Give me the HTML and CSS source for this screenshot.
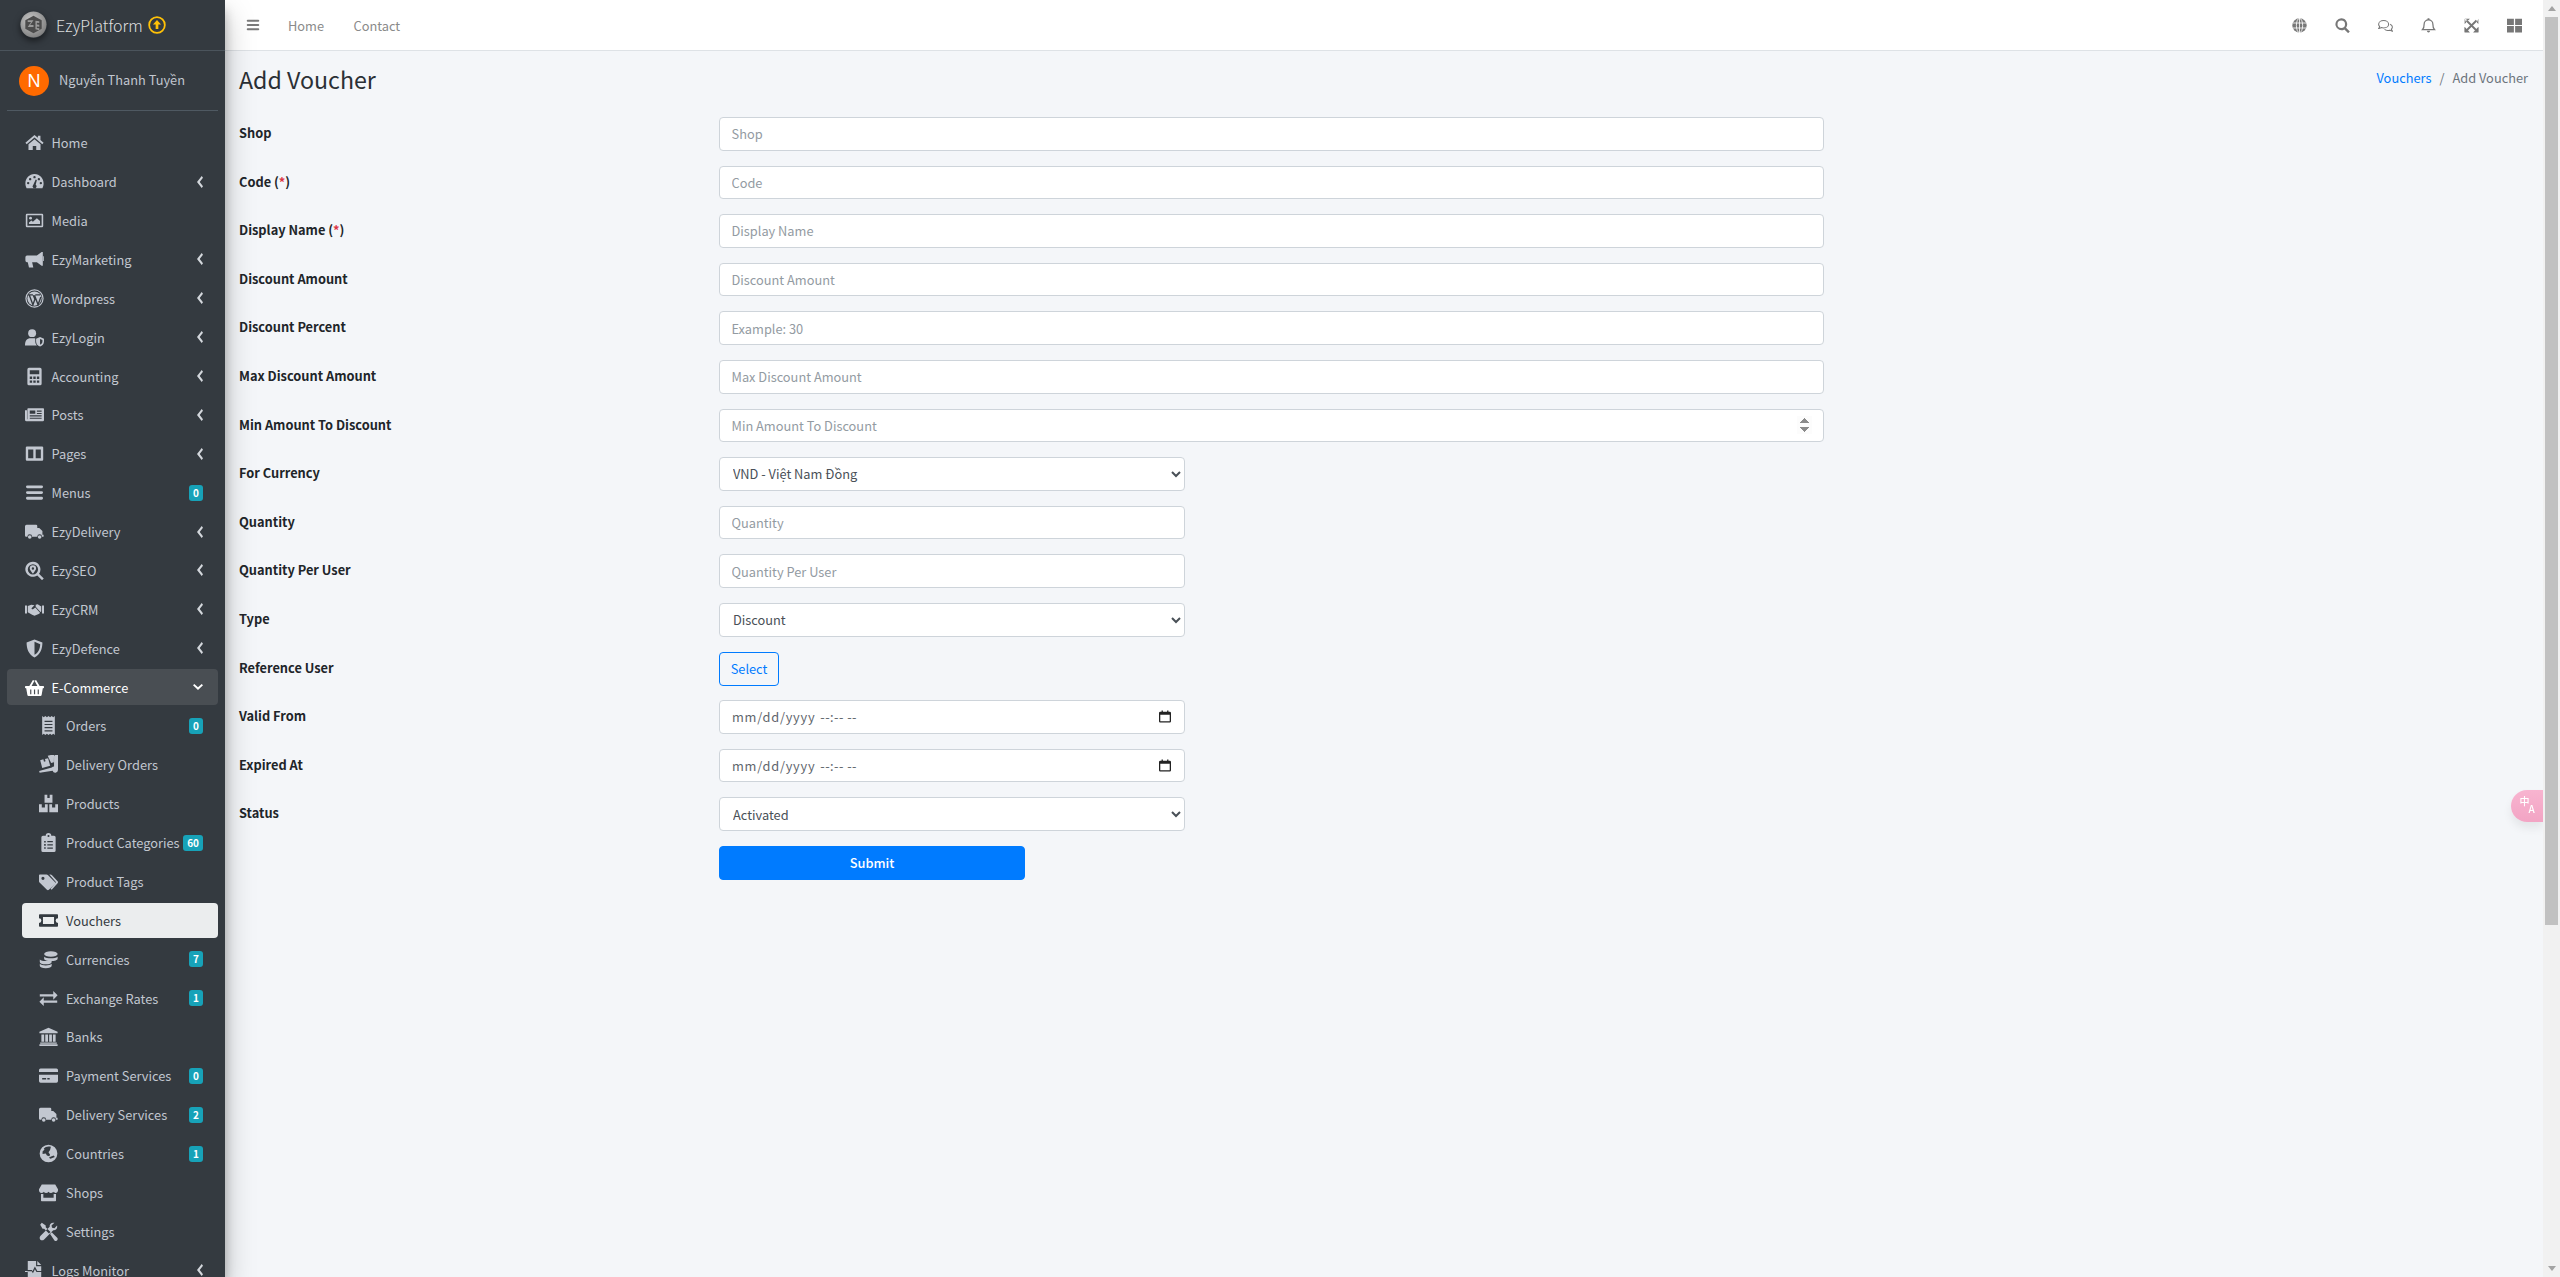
FILE: index.html
```html
<!DOCTYPE html>
<html lang="en">
<head>
<meta charset="utf-8">
<title>Add Voucher</title>
<link rel="stylesheet" href="styles.css">
</head>
<body>
<svg class="defs" aria-hidden="true">
<defs>
<radialGradient id="logo-grad" cx="40%" cy="35%" r="70%"><stop offset="0" stop-color="#c9c9c9"/><stop offset="1" stop-color="#7d7d7d"/></radialGradient>
<symbol id="i-logo" viewBox="0 0 28 28"><circle cx="14" cy="14" r="13.500" fill="url(#logo-grad)"/><path d="M14 5l8.500 4.500v9L14 23l-8.500-4.500v-9z" fill="#4c4c4c"/><path d="M8 9.500h6l-3.500 5H14v2H8l3.500-5H8zM16 10l4 .5v2l-2.500-.3v1.800l2.500.3v2l-2.500-.3v1.500l2.500.5v2l-4-1z" fill="#9a9a9a"/></symbol>
<symbol id="i-home" viewBox="0 0 24 24"><path d="M12 2.500 0.500 12.300l1.600 1.800L12 5.700l9.900 8.400 1.600-1.800-4-3.400V3.500h-3.200v2.600z"/><path d="M12 7.800 4.400 14.200V21.500h5.400v-5h4.400v5h5.400v-7.300z"/></symbol>
<symbol id="i-dash" viewBox="0 0 24 24"><path fill-rule="evenodd" d="M12 2.500C5.400 2.500 0.500 8 0.500 14.500c0 2.200.6 4 1.500 6h20c.9-2 1.500-3.800 1.500-6C23.500 8 18.600 2.500 12 2.500zM12 5a1.500 1.500 0 1 1 0 3 1.500 1.500 0 0 1 0-3zM6.500 7.500a1.500 1.500 0 1 1 0 3 1.500 1.500 0 0 1 0-3zM17.500 7.500a1.500 1.500 0 1 1 0 3 1.500 1.500 0 0 1 0-3zM4 12.500a1.500 1.500 0 1 1 0 3 1.500 1.500 0 0 1 0-3zM20 12.500a1.500 1.500 0 1 1 0 3 1.500 1.500 0 0 1 0-3zM13.500 9.500l1.500.5-1.500 6a2.500 2.500 0 1 1-3 .2z"/></symbol>
<symbol id="i-image" viewBox="0 0 24 24"><path fill-rule="evenodd" d="M2.500 3.500h19A1.500 1.500 0 0 1 23 5v14a1.500 1.500 0 0 1-1.500 1.500h-19A1.500 1.500 0 0 1 1 19V5a1.500 1.500 0 0 1 1.500-1.500zM3 5.500v13h18v-13z"/><circle cx="7" cy="9" r="1.800"/><path d="M5 16.500v-2l3-2.500 2 1.500 5-4.500 4 3.500v4z"/></symbol>
<symbol id="i-horn" viewBox="0 0 24 24"><path d="M21 2.500h1.500V20H21l-6-4.500H9l1.500 6.500H5L3.500 15.500H2.500C1.500 15.500 .5 14.500 .5 13V9.500C.5 8 1.500 7 2.500 7H15z"/><path d="M23 8h1v6h-1z"/></symbol>
<symbol id="i-wp" viewBox="0 0 24 24"><circle cx="12" cy="12" r="10.800" fill="none" stroke="currentColor" stroke-width="1.500"/><circle cx="12" cy="12" r="9"/><path d="M4 7.500h6M13 7.500h6M5.500 8 10 20l2.500-7-2-5M12 8l4.500 12L20 10" fill="none" stroke="#343a40" stroke-width="1.700"/></symbol>
<symbol id="i-ushield" viewBox="0 0 24 24"><circle cx="9" cy="6.500" r="5"/><path d="M0 22c0-6 2.500-9 7-9h4c1 0 1.500.1 2 .3V17c0 2 .8 3.600 2 5z"/><path fill-rule="evenodd" d="M19 11.500l5 2v3.500c0 3-2 5.500-5 6.500-3-1-5-3.500-5-6.500v-3.500zM19 14v7c1.800-.8 3-2.200 3-4v-2z"/></symbol>
<symbol id="i-calc" viewBox="0 0 24 24"><path fill-rule="evenodd" d="M5 1h14a2 2 0 0 1 2 2v18a2 2 0 0 1-2 2H5a2 2 0 0 1-2-2V3a2 2 0 0 1 2-2zM6 4v5h12V4zM6 12v3h3v-3zM10.500 12v3h3v-3zM15 12v3h3v-3zM6 17v3h3v-3zM10.500 17v3h3v-3zM15 17v3h3v-3z"/></symbol>
<symbol id="i-news" viewBox="0 0 24 24"><path fill-rule="evenodd" d="M4 4h19a1 1 0 0 1 1 1v14a1.500 1.500 0 0 1-1.500 1.500H2a2 2 0 0 1-2-2V6.500h2.500V18H3V5a1 1 0 0 1 1-1zM6 7v4h7V7zM15 7v1.500h6V7zM15 10v1.500h6V10zM6 13v1.500h15V13zM6 16v1.500h15V16z"/></symbol>
<symbol id="i-cols" viewBox="0 0 24 24"><path fill-rule="evenodd" d="M2.500 3h19A1.500 1.500 0 0 1 23 4.500v15a1.500 1.500 0 0 1-1.500 1.500h-19A1.500 1.500 0 0 1 1 19.500v-15A1.500 1.500 0 0 1 2.500 3zM4 7v11h6.500V7zM13.500 7v11H20V7z"/></symbol>
<symbol id="i-bars" viewBox="0 0 24 24"><path d="M3 3h18a1 1 0 0 1 0 3.500H3A1 1 0 0 1 3 3zM3 10.300h18a1 1 0 0 1 0 3.500H3a1 1 0 0 1 0-3.500zM3 17.500h18a1 1 0 0 1 0 3.500H3a1 1 0 0 1 0-3.500z"/></symbol>
<symbol id="i-truck" viewBox="0 0 24 24"><path d="M2 3.500h12a1.500 1.500 0 0 1 1.500 1.500v2.500H18l4 4v4.500h1.500v2.500h-2a3 3 0 0 0-6 0H9a3 3 0 0 0-6 0H1.500A1.500 1.500 0 0 1 0 17V5.500a2 2 0 0 1 2-2z"/><circle cx="6" cy="19" r="2.300"/><circle cx="18.500" cy="19" r="2.300"/></symbol>
<symbol id="i-seo" viewBox="0 0 24 24"><path fill-rule="evenodd" d="M10 1a9.500 9.500 0 0 1 7.700 15l6 6-2.200 2.200-6-6A9.500 9.500 0 1 1 10 1zM10 4a6.500 6.500 0 1 0 0 13 6.500 6.500 0 0 0 0-13z"/><path fill-rule="evenodd" d="M10 5.500a4 4 0 0 1 4 4c0 1.800-2.500 4.800-4 6.500-1.500-1.700-4-4.700-4-6.500a4 4 0 0 1 4-4zM10 8a1.500 1.500 0 1 0 0 3 1.500 1.500 0 0 0 0-3z"/></symbol>
<symbol id="i-shake" viewBox="0 0 24 24"><path d="M0 7h2.500v10H0zM21.500 7H24v10h-2.500zM3.500 7.500 8 6l4 .5-3.500 3.500c-.8 1 .8 2.500 2 1.500L13 9.500l6 6.500-1 1.500-6 2.500-3-1.500-5.500-3z"/><path d="M13.500 6l2.500-.5 3.500 2 1 .5v6.500l-1 .5-6-6.500z"/></symbol>
<symbol id="i-shield" viewBox="0 0 24 24"><path fill-rule="evenodd" d="M12 .5l10 4c0 8-2.500 15-10 19-7.500-4-10-11-10-19zM12 3.500V20c5-3 7-7.500 7.200-13.500z"/></symbol>
<symbol id="i-basket" viewBox="0 0 24 24"><path fill-rule="evenodd" d="M1 10h4.500L10 2.500l2 1L8.300 10h7.400L12 3.500l2-1L18.500 10H23a1 1 0 0 1 1 1v1a1 1 0 0 1-1 1h-.5l-1.500 8.500a1.500 1.500 0 0 1-1.500 1.200h-15A1.500 1.500 0 0 1 3 21.500L1.500 13H1a1 1 0 0 1-1-1v-1a1 1 0 0 1 1-1zM6.500 14.500v6h1.500v-6zM11.300 14.500v6h1.500v-6zM16 14.500v6h1.500v-6z"/></symbol>
<symbol id="i-receipt" viewBox="0 0 24 24"><path fill-rule="evenodd" d="M4 0l2 1.500L8 0l2 1.500L12 0l2 1.500L16 0l2 1.500L20 0v24l-2-1.500-2 1.500-2-1.500-2 1.500-2-1.500L8 24l-2-1.500L4 24zM7 6v1.500h10V6zM7 10v1.500h10V10zM7 14v1.500h10V14zM7 18v1.500h10V18z"/></symbol>
<symbol id="i-dolly" viewBox="0 0 24 24"><path d="M21.500 0H24v19a3.500 3.500 0 0 1-6.800 1L.8 22.500l-.6-2.300 16-4.300c.7-.7 1.600-1.300 2.800-1.300L19 1.500c0-.9 1.300-1.500 2.500-1.500z"/><path d="M1.500 6.500l4-1 .8 3 2-.5-.8-3 4-1 2.600 9.700-10 2.700zM11 1l6-1.500 2 0-.2 9.500-3.500 1z"/></symbol>
<symbol id="i-boxes" viewBox="0 0 24 24"><path d="M7 1h3.500v4h3V1H17v10H7zM0 13h3.500v4h4v-4H11v10H0zM13 13h3.500v4h4v-4H24v10H13z"/></symbol>
<symbol id="i-clip" viewBox="0 0 24 24"><path fill-rule="evenodd" d="M5 3.500h3.500a3.500 3.500 0 0 1 7 0H19a2 2 0 0 1 2 2V22a2 2 0 0 1-2 2H5a2 2 0 0 1-2-2V5.500a2 2 0 0 1 2-2zM12 2.500a1.300 1.300 0 1 0 0 2.600 1.300 1.300 0 0 0 0-2.600zM6.500 10v2h2v-2zM6.500 14v2h2v-2zM6.500 18v2h2v-2zM10.500 10.200v1.600h7v-1.600zM10.500 14.200v1.600h7v-1.600zM10.500 18.200v1.600h7v-1.600z"/></symbol>
<symbol id="i-tags" viewBox="0 0 24 24"><path fill-rule="evenodd" d="M1 3h8.500c.7 0 1.300.3 1.700.7l8.800 8.800a1.800 1.800 0 0 1 0 2.500L12.500 22.500a1.800 1.800 0 0 1-2.500 0L.7 13.200A2 2 0 0 1 0 11.700V4a1 1 0 0 1 1-1zM5 6a2 2 0 1 0 0 4 2 2 0 0 0 0-4z"/><path d="M13 3h1.500c.7 0 1.300.3 1.700.7l7.300 8a2 2 0 0 1 0 2.600l-7.500 8.200-1.500-1.500 6.500-7.800c.3-.3.300-.7 0-1z"/></symbol>
<symbol id="i-ticket" viewBox="0 0 24 24"><path fill-rule="evenodd" d="M1 4h22a1 1 0 0 1 1 1v4a3 3 0 0 0 0 6v4a1 1 0 0 1-1 1H1a1 1 0 0 1-1-1v-4a3 3 0 0 0 0-6V5a1 1 0 0 1 1-1zM5 7.500v9h14v-9z"/></symbol>
<symbol id="i-coins" viewBox="0 0 24 24"><ellipse cx="15" cy="5" rx="8.500" ry="3.500"/><path d="M6.500 8.500c1.500 1.300 5 2 8.500 2s7-.7 8.500-2V11c0 1.700-3.500 3-8.500 3s-8.500-1.300-8.500-3z"/><path d="M1 12c1.500 1.300 4 2 7.500 2s6-.7 7.500-2v3c0 1.700-3 3-7.500 3S1 16.700 1 15zM1 17.500c1.500 1.300 4 2 7.500 2s6-.7 7.500-2V20c0 1.700-3 3-7.500 3S1 21.700 1 20z"/></symbol>
<symbol id="i-swap" viewBox="0 0 24 24"><path d="M1 6.500h17V2.500l5.500 5.500-5.500 5.500v-4H1zM23 14.500H6v-4L.5 16 6 21.500v-4h17z"/></symbol>
<symbol id="i-bank" viewBox="0 0 24 24"><path d="M12 1l11.500 5v2H.5V6zM3 9.500h3.500v9H3zM7.900 9.500h3.500v9H7.900zM12.800 9.500h3.500v9h-3.500zM17.600 9.500H21v9h-3.400zM1.500 19.500h21V21h-21zM.5 21.800h23V24H.5z"/></symbol>
<symbol id="i-card" viewBox="0 0 24 24"><path fill-rule="evenodd" d="M0 11h24v8a2 2 0 0 1-2 2H2a2 2 0 0 1-2-2zM4 15v2h5v-2zM10.500 15v2h3v-2z"/><path d="M2 3h20a2 2 0 0 1 2 2v2.500H0V5a2 2 0 0 1 2-2z"/></symbol>
<symbol id="i-globe" viewBox="0 0 24 24"><path fill-rule="evenodd" d="M12 .8a11.200 11.200 0 1 1 0 22.400 11.200 11.200 0 0 1 0-22.400zM4.500 12.500l4-.5 1.500 2.500 3 1 1-2-2-3 2-3 1-4C12 2.500 8 3 6 6l1 1-2.500 2.500zM14.500 18.500l5.500-2-1.500-2-4 1.500-2 1.500z"/></symbol>
<symbol id="i-store" viewBox="0 0 24 24"><path d="M3.500 2h17L24 8c.3 2.500-1 4.500-3 4.500-1.500 0-2.500-.5-3-1.500-.7 1-1.800 1.500-3 1.500s-2.300-.5-3-1.500c-.7 1-1.800 1.500-3 1.500s-2.300-.5-3-1.500c-.5 1-1.500 1.500-3 1.500C1 12.500-.3 10.500 0 8z"/><path d="M2.500 14h3v4.500h13V14h3v8a1 1 0 0 1-1 1h-17a1 1 0 0 1-1-1z"/></symbol>
<symbol id="i-tools" viewBox="0 0 24 24"><path d="M1.500 3.500l2-2.500 5 3.500v2l6 6-2 2-6-6h-2zM18 1c-3 0-5 2.500-4.500 5L2 17.500C.5 19 .5 21 1.700 22.300 3 23.500 5 23.500 6.500 22L18 10.500c2.500.5 5-1.500 5-4.500 0-.5 0-1-.2-1.500L19.500 8l-3-.7-.7-3L19.500 1c-.5 0-1 0-1.500 0z"/><path d="M14 15l2-2 7 7a2.500 2.500 0 0 1-3.500 3.500z"/></symbol>
<symbol id="i-logfile" viewBox="0 0 24 24"><path d="M3.500 0H14v6.500h6.500V22a2 2 0 0 1-2 2H5.500a2 2 0 0 1-2-2V13h5l1.500 2.500 2.500-5 2 3.500h6v-1.500h-5L12.500 7l-3 6-.8-1.500H3.500z"/><path d="M15.500 0l5 5h-5zM0 12.500h3.500V14H0z"/></symbol>
<symbol id="i-search" viewBox="0 0 24 24"><path fill-rule="evenodd" d="M10 .5a9.500 9.500 0 0 1 7.700 15l6 6-2.700 2.700-6-6A9.500 9.500 0 1 1 10 .5zM10 4a6 6 0 1 0 0 12 6 6 0 0 0 0-12z"/></symbol>
<symbol id="i-comments" viewBox="0 0 24 24"><g fill="none" stroke="currentColor" stroke-width="1.700"><path d="M9 4c-4.400 0-8 2.500-8 6 0 1.500.7 2.800 1.700 3.800-.3 1.200-1 2.200-1.700 3 1.500 0 3-.7 4-1.500 1.200.5 2.500.7 4 .7 4.400 0 8-2.500 8-6s-3.600-6-8-6z"/><path d="M19.500 10c2 1 3.500 2.500 3.500 4.500 0 1.300-.6 2.500-1.600 3.500.3 1.200.9 2.200 1.600 3-1.500 0-2.900-.7-4-1.500-1.200.4-2.400.6-3.500.5-2 0-4-.8-5-2"/></g></symbol>
<symbol id="i-bell" viewBox="0 0 24 24"><path fill="none" stroke="currentColor" stroke-width="2" d="M12 3a7 7 0 0 1 7 7c0 5 1 7 2.500 8.500H2.500C4 17 5 15 5 10a7 7 0 0 1 7-7z"/><path d="M10.500.5h3V3h-3zM9.500 20.500h5a2.500 2.500 0 0 1-5 0z"/></symbol>
<symbol id="i-expand" viewBox="0 0 24 24"><path d="M1 1h8.500L7 3.500 1 1zM14.500 1H23v8.500L20.500 7 23 1zM1 14.500V23h8.500L7 20.500zM23 14.500V23h-8.500l2.500-2.500z"/><path d="M1 1v8.500L3.500 7zM1 23v-8.500L3.500 17zM23 23v-8.500L20.500 17z"/><path d="M4 4l16 16M20 4 4 20" fill="none" stroke="currentColor" stroke-width="3"/></symbol>
<symbol id="i-grid" viewBox="0 0 24 24"><path d="M0 1h11v10.300H0zM13 1h11v10.300H13zM0 12.700h11V23H0zM13 12.700h11V23H13z"/></symbol>
<symbol id="i-net" viewBox="0 0 24 24"><circle cx="12" cy="12" r="11.500"/><g fill="none" stroke="#fff" stroke-width="1.300"><ellipse cx="12" cy="12" rx="5" ry="11.500"/><path d="M12 0v24M1 8h22M1 16h22"/></g></symbol>
<symbol id="i-left" viewBox="0 0 6 12"><path d="M4.700 0 6 1.800 2.700 6 6 10.200 4.700 12 0 6z"/></symbol>
<symbol id="i-down" viewBox="0 0 10 6"><path d="M0 1.200 1.300 0 5 3.200 8.700 0 10 1.200 5 6z"/></symbol>
<symbol id="i-up" viewBox="0 0 20 20"><circle cx="10" cy="10" r="8.700" fill="none" stroke="currentColor" stroke-width="2"/><path d="M10 4.500l4.500 5h-3v5h-3v-5h-3z"/></symbol>
<symbol id="i-cal" viewBox="0 0 14 14"><path fill="#222" fill-rule="evenodd" d="M3 0h1.500v1.500h5V0H11v1.500h1.500A1.500 1.500 0 0 1 14 3v9.500a1.500 1.500 0 0 1-1.500 1.500h-11A1.500 1.500 0 0 1 0 12.500V3a1.500 1.500 0 0 1 1.500-1.500H3zM1.500 5v7.500h11V5z"/></symbol>
</defs>
</svg>

<div class="layout">
<aside class="sidebar">
  <div class="brand">
    <svg class="logo"><use href="#i-logo"/></svg>
    <span class="brand-name">EzyPlatform</span>
    <svg class="brand-up"><use href="#i-up"/></svg>
  </div>
  <div class="user">
    <span class="avatar">N</span>
    <span class="user-name">Nguyễn Thanh Tuyền</span>
  </div>
  <nav class="menu">
    <a class="link"><svg class="ic"><use href="#i-home"/></svg><span>Home</span></a>
    <a class="link"><svg class="ic"><use href="#i-dash"/></svg><span>Dashboard</span><svg class="chev"><use href="#i-left"/></svg></a>
    <a class="link"><svg class="ic"><use href="#i-image"/></svg><span>Media</span></a>
    <a class="link"><svg class="ic"><use href="#i-horn"/></svg><span>EzyMarketing</span><svg class="chev"><use href="#i-left"/></svg></a>
    <a class="link"><svg class="ic"><use href="#i-wp"/></svg><span>Wordpress</span><svg class="chev"><use href="#i-left"/></svg></a>
    <a class="link"><svg class="ic"><use href="#i-ushield"/></svg><span>EzyLogin</span><svg class="chev"><use href="#i-left"/></svg></a>
    <a class="link"><svg class="ic"><use href="#i-calc"/></svg><span>Accounting</span><svg class="chev"><use href="#i-left"/></svg></a>
    <a class="link"><svg class="ic"><use href="#i-news"/></svg><span>Posts</span><svg class="chev"><use href="#i-left"/></svg></a>
    <a class="link"><svg class="ic"><use href="#i-cols"/></svg><span>Pages</span><svg class="chev"><use href="#i-left"/></svg></a>
    <a class="link"><svg class="ic"><use href="#i-bars"/></svg><span>Menus</span><b class="badge">0</b></a>
    <a class="link"><svg class="ic"><use href="#i-truck"/></svg><span>EzyDelivery</span><svg class="chev"><use href="#i-left"/></svg></a>
    <a class="link"><svg class="ic"><use href="#i-seo"/></svg><span>EzySEO</span><svg class="chev"><use href="#i-left"/></svg></a>
    <a class="link"><svg class="ic"><use href="#i-shake"/></svg><span>EzyCRM</span><svg class="chev"><use href="#i-left"/></svg></a>
    <a class="link"><svg class="ic"><use href="#i-shield"/></svg><span>EzyDefence</span><svg class="chev"><use href="#i-left"/></svg></a>
    <a class="link open"><svg class="ic"><use href="#i-basket"/></svg><span>E-Commerce</span><svg class="chev-down"><use href="#i-down"/></svg></a>
    <a class="link sub"><svg class="ic"><use href="#i-receipt"/></svg><span>Orders</span><b class="badge">0</b></a>
    <a class="link sub"><svg class="ic"><use href="#i-dolly"/></svg><span>Delivery Orders</span></a>
    <a class="link sub"><svg class="ic"><use href="#i-boxes"/></svg><span>Products</span></a>
    <a class="link sub"><svg class="ic"><use href="#i-clip"/></svg><span>Product Categories</span><b class="badge">60</b></a>
    <a class="link sub"><svg class="ic"><use href="#i-tags"/></svg><span>Product Tags</span></a>
    <a class="link sub active"><svg class="ic"><use href="#i-ticket"/></svg><span>Vouchers</span></a>
    <a class="link sub"><svg class="ic"><use href="#i-coins"/></svg><span>Currencies</span><b class="badge">7</b></a>
    <a class="link sub"><svg class="ic"><use href="#i-swap"/></svg><span>Exchange Rates</span><b class="badge">1</b></a>
    <a class="link sub"><svg class="ic"><use href="#i-bank"/></svg><span>Banks</span></a>
    <a class="link sub"><svg class="ic"><use href="#i-card"/></svg><span>Payment Services</span><b class="badge">0</b></a>
    <a class="link sub"><svg class="ic"><use href="#i-truck"/></svg><span>Delivery Services</span><b class="badge">2</b></a>
    <a class="link sub"><svg class="ic"><use href="#i-globe"/></svg><span>Countries</span><b class="badge">1</b></a>
    <a class="link sub"><svg class="ic"><use href="#i-store"/></svg><span>Shops</span></a>
    <a class="link sub"><svg class="ic"><use href="#i-tools"/></svg><span>Settings</span></a>
    <a class="link"><svg class="ic"><use href="#i-logfile"/></svg><span>Logs Monitor</span><svg class="chev"><use href="#i-left"/></svg></a>
  </nav>
</aside>

<div class="main">
  <header class="topbar">
    <svg class="top-burger"><use href="#i-bars"/></svg>
    <a class="top-link">Home</a>
    <a class="top-link">Contact</a>
    <div class="top-icons">
      <svg class="top-ic"><use href="#i-net"/></svg>
      <svg class="top-ic"><use href="#i-search"/></svg>
      <svg class="top-ic"><use href="#i-comments"/></svg>
      <svg class="top-ic"><use href="#i-bell"/></svg>
      <svg class="top-ic"><use href="#i-expand"/></svg>
      <svg class="top-ic"><use href="#i-grid"/></svg>
    </div>
  </header>
  <section class="content">
    <div class="title-row">
      <h1>Add Voucher</h1>
      <div class="crumbs"><a>Vouchers</a><i>/</i><span>Add Voucher</span></div>
    </div>
    <form class="form">
      <div class="row"><label>Shop</label><input class="field" placeholder="Shop"></div>
      <div class="row"><label>Code (<em>*</em>)</label><input class="field" placeholder="Code"></div>
      <div class="row"><label>Display Name (<em>*</em>)</label><input class="field" placeholder="Display Name"></div>
      <div class="row"><label>Discount Amount</label><input class="field" placeholder="Discount Amount"></div>
      <div class="row"><label>Discount Percent</label><input class="field" placeholder="Example: 30"></div>
      <div class="row"><label>Max Discount Amount</label><input class="field" placeholder="Max Discount Amount"></div>
      <div class="row"><label>Min Amount To Discount</label><input class="field spin" type="number" placeholder="Min Amount To Discount"></div>
      <div class="row"><label>For Currency</label><select class="field half"><option>VND - Việt Nam Đồng</option></select></div>
      <div class="row"><label>Quantity</label><input class="field half" placeholder="Quantity"></div>
      <div class="row"><label>Quantity Per User</label><input class="field half" placeholder="Quantity Per User"></div>
      <div class="row"><label>Type</label><select class="field half"><option>Discount</option></select></div>
      <div class="row"><label>Reference User</label><button type="button" class="btn-select">Select</button></div>
      <div class="row"><label>Valid From</label><div class="field half date"><span class="date-text">mm/dd/yyyy</span><span class="date-time">--:-- --</span><svg class="cal"><use href="#i-cal"/></svg></div></div>
      <div class="row"><label>Expired At</label><div class="field half date"><span class="date-text">mm/dd/yyyy</span><span class="date-time">--:-- --</span><svg class="cal"><use href="#i-cal"/></svg></div></div>
      <div class="row"><label>Status</label><select class="field half"><option>Activated</option></select></div>
      <div class="row"><span></span><button type="button" class="btn-submit">Submit</button></div>
    </form>
  </section>
</div>
<div class="scrollbar">
  <span class="sb-btn"><span class="sb-up"></span></span>
  <span class="sb-thumb"></span>
  <span class="sb-rest"></span>
  <span class="sb-btn"><span class="sb-dn"></span></span>
</div>
</div>
<div class="translate"><span class="tr-zh">中</span><span class="tr-a">A</span></div>
</body>
</html>
```
FILE: styles.css
```css
* { box-sizing: border-box; }
html, body { height: 100%; overflow: hidden; }
body {
  margin: 0;
  background: #f4f6f9;
  color: #212529;
  font: 400 12.8px/21px "Noto Sans CJK SC", "Noto Sans", sans-serif;
}
.defs { display: block; width: 0; height: 0; overflow: hidden; }
svg { fill: currentColor; display: block; flex: none; }
.layout { display: flex; height: 1277px; overflow: hidden; }

/* scrollbar */
.scrollbar { width: 17px; flex: none; background: #f1f1f1; display: flex; flex-direction: column; position: relative; z-index: 3; }
.sb-btn { height: 17px; flex: none; display: flex; align-items: center; justify-content: center; }
.sb-up { border: 4.500px solid transparent; border-top: 0; border-bottom: 5px solid #a3a3a3; }
.sb-dn { border: 4.500px solid transparent; border-bottom: 0; border-top: 5px solid #a3a3a3; }
.sb-thumb { height: 908px; flex: none; margin: 0 2px; background: #c1c1c1; }
.sb-rest { flex: 1; }

/* sidebar */
.sidebar {
  width: 225px;
  flex: none;
  position: relative;
  z-index: 2;
  background: #343a40;
  color: #c2c7d0;
  box-shadow: 0 14px 28px rgba(0,0,0,.25), 0 10px 10px rgba(0,0,0,.22);
}
.brand {
  height: 51px;
  display: flex;
  align-items: center;
  padding-left: 20px;
  border-bottom: 1px solid #4b545c;
}
.logo { width: 27px; height: 27px; border-radius: 50%; box-shadow: 0 3px 6px rgba(0,0,0,.5); margin-top: -2px; }
.brand-name { margin-left: 9px; font-size: 16px; font-weight: 300; color: rgba(255,255,255,.85); line-height: 24px; }
.brand-up { width: 18px; height: 18px; margin-left: 5px; color: #ffc107; }
.user {
  height: 60px;
  margin: 0 7px;
  display: flex;
  align-items: center;
  padding-left: 12px;
  border-bottom: 1px solid #4f5962;
}
.avatar {
  width: 30px; height: 30px; border-radius: 50%;
  background: #ff6a00; color: #fff;
  display: flex; align-items: center; justify-content: center;
  font: 400 18px/30px "Liberation Sans", sans-serif;
}
.user-name { margin-left: 10px; margin-top: -2px; color: #c2c7d0; }
.menu { padding: 14px 7px 0; }
.link {
  height: 35.7px;
  margin-bottom: 3.2px;
  display: flex;
  align-items: center;
  padding: 0 15px 0 16px;
  border-radius: 4px;
  color: #c2c7d0;
  white-space: nowrap;
}
.link .ic { width: 19px; height: 19px; margin: 0 8px 0 1.500px; }
.link.sub { margin-left: 15px; }
.link.sub .ic { margin: 0 8.500px 0 .5px; }
.chev { width: 6px; height: 12px; margin-left: auto; color: #d3d7dc; }
.chev-down { width: 10px; height: 6px; margin-left: auto; color: #fff; }
.badge {
  margin-left: auto;
  min-width: 14px;
  height: 16px;
  padding: 0 4px;
  border-radius: 3px;
  background: #17a2b8;
  color: #fff;
  font: 700 10px/16px "Noto Sans CJK SC", sans-serif;
  text-align: center;
}
.link.open { background: #494e53; color: #fff; }
.link.active { background: #ebedee; color: #343a40; }

/* top bar */
.main { flex: 1; min-width: 0; }
.topbar {
  height: 51px;
  background: #fff;
  border-bottom: 1px solid #dee2e6;
  display: flex;
  align-items: center;
}
.top-burger { width: 14px; height: 14px; margin-left: 21px; margin-right: 28px; color: #7a7a7a; }
.top-link { color: #8a8a8a; margin-right: 29.500px; }
.top-icons { margin-left: auto; margin-right: 21.500px; display: flex; gap: 28px; color: #777; }
.top-ic { width: 15px; height: 15px; }

/* content */
.content { padding: 0 15px 0 14px; }
.title-row { display: flex; justify-content: space-between; align-items: center; height: 66px; }
h1 { margin: -10px 0 0; font-size: 23.200px; font-weight: 400; line-height: 38px; color: #2b3035; }
.crumbs { display: flex; color: #6c757d; margin-top: -14px; }
.crumbs a { color: #007bff; }
.crumbs i { font-style: normal; margin: 0 8px; }
.form { display: block; }
.row {
  display: grid;
  grid-template-columns: 480px 1105px;
  height: 33.600px;
  margin-bottom: 15px;
  justify-items: start;
}
label { font-weight: 700; line-height: 21px; color: #212529; padding-top: 5px; }
label em { color: #dc3545; font-style: normal; }
.field {
  width: 100%;
  height: 33.600px;
  padding: 0 11.500px;
  background: #fff;
  border: 1px solid #ced4da;
  border-radius: 4px;
  color: #495057;
  font: 400 12.8px "Noto Sans CJK SC", sans-serif;
  outline: 0;
}
.field.half { width: 466px; }
select.field { padding-left: 9px; }
.field::placeholder { color: #939ba2; opacity: 1; }
.spin::-webkit-inner-spin-button { opacity: 1; }
.date { display: flex; align-items: center; padding-left: 12px; padding-right: 13px; color: #5f666d; line-height: 21px; }
.date-text { letter-spacing: .75px; }
.date-time { margin-left: 5px; letter-spacing: .45px; }
.cal { width: 12px; height: 13px; margin-left: auto; }
.btn-select {
  width: 60px; height: 34px;
  background: transparent;
  border: 1px solid #007bff;
  border-radius: 4px;
  color: #007bff;
  font: 400 12.8px "Noto Sans CJK SC", sans-serif;
  padding: 0;
}
.btn-submit {
  width: 306px; height: 34px;
  background: #007bff;
  border: 1px solid #007bff;
  border-radius: 4px;
  color: #fff;
  font: 500 12.8px "Noto Sans CJK SC", sans-serif;
  padding: 0;
}
.translate {
  position: fixed;
  right: 17px;
  top: 790px;
  width: 32px;
  height: 32px;
  border-radius: 16px 0 0 16px;
  background: linear-gradient(180deg, #f8b4d0, #f2a4c4);
  box-shadow: 0 6px 10px rgba(0,0,0,.07);
  color: #fff;
  display: flex;
  justify-content: center;
  font: 500 10px/1 "Noto Sans CJK SC", sans-serif;
}
.tr-zh { margin-top: 6px; }
.tr-a { margin-top: 14px; margin-left: -1px; }
```
